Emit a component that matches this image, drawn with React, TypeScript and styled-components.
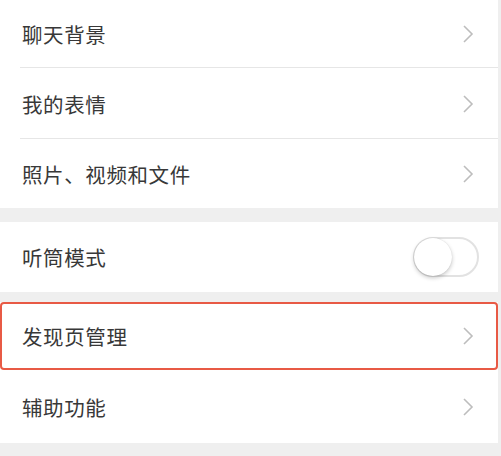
import * as React from "react"
import styled, { createGlobalStyle } from "styled-components"

const Global = createGlobalStyle`
  html, body {
    margin: 0;
    padding: 0;
    background: #efefef;
    font-family: "Noto Sans CJK SC", "Noto Sans", sans-serif;
  }
`

const Page = styled.div`
  width: 501px;
  height: 456px;
  overflow: hidden;
  background: #efefef;
  display: flex;
  flex-direction: column;
`

const Group = styled.div<{ $gap: number }>`
  background: #fff;
  margin-bottom: ${(p) => p.$gap}px;
  width: 498px;
`

const Row = styled.div<{ $divider?: boolean; $highlight?: boolean; $h?: number }>`
  height: ${(p) => p.$h ?? 70}px;
  display: flex;
  align-items: center;
  padding: 0 24px 0 22px;
  box-sizing: border-box;
  position: relative;
  ${(p) =>
    p.$highlight &&
    `
    border: 2px solid #e85a45;
    border-radius: 4px;
    padding-left: 20px;
    padding-right: 22px;
  `}
  &::after {
    content: "";
    display: ${(p) => (p.$divider ? "block" : "none")};
    position: absolute;
    left: 20px;
    right: 0;
    bottom: 0;
    height: 1px;
    background: #e6e6e6;
  }
`

const Label = styled.span`
  flex: 1;
  font-size: 20.5px;
  color: #383838;
  letter-spacing: 0.6px;
`

const Chevron = () => (
  <svg width="12" height="20" viewBox="0 0 12 20">
    <path d="M2 2 L10 10 L2 18" fill="none" stroke="#bdbdbd" strokeWidth="1.6" />
  </svg>
)

const Toggle = styled.div`
  flex: 0 0 auto;
  width: 66px;
  height: 40px;
  box-sizing: border-box;
  border-radius: 20px;
  border: 2px solid #e2e2e2;
  background: #fff;
  position: relative;
  margin-right: -5px;
  &::before {
    content: "";
    position: absolute;
    left: -1px;
    top: -1px;
    width: 38px;
    height: 38px;
    border-radius: 50%;
    background: #fff;
    box-shadow: 0 2px 4px rgba(0, 0, 0, 0.22), 0 0 1px rgba(0, 0, 0, 0.15);
  }
`

export default function App() {
  return (
    <Page>
      <Global />
      <Group $gap={14}>
        <Row $divider $h={68}>
          <Label>聊天背景</Label>
          <Chevron />
        </Row>
        <Row $divider $h={71}>
          <Label>我的表情</Label>
          <Chevron />
        </Row>
        <Row $h={69}>
          <Label>照片、视频和文件</Label>
          <Chevron />
        </Row>
      </Group>
      <Group $gap={10}>
        <Row>
          <Label>听筒模式</Label>
          <Toggle />
        </Row>
      </Group>
      <Group $gap={13}>
        <Row $highlight $h={68}>
          <Label>发现页管理</Label>
          <Chevron />
        </Row>
        <Row $h={73}>
          <Label>辅助功能</Label>
          <Chevron />
        </Row>
      </Group>
    </Page>
  )
}
